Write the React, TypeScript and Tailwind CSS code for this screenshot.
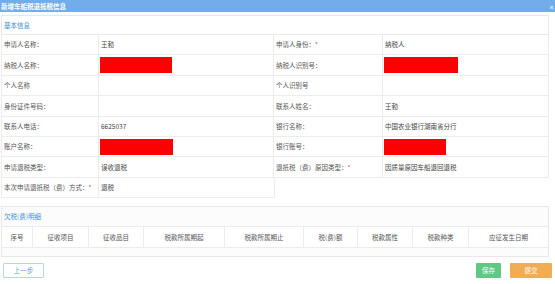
import React from 'react';

const font = { fontFamily: '"Noto Sans CJK SC", "Noto Sans", sans-serif' };

type Cell = { label: string; req?: boolean; value?: string; redact?: number };

const rows: [Cell, Cell][] = [
  [{ label: '申请人名称：', value: '王勃' }, { label: '申请人身份：', req: true, value: '纳税人' }],
  [{ label: '纳税人名称：', redact: 72 }, { label: '纳税人识别号：', redact: 74 }],
  [{ label: '个人名称' }, { label: '个人识别号' }],
  [{ label: '身份证件号码：' }, { label: '联系人姓名：', value: '王勃' }],
  [{ label: '联系人电话：', value: '6625037' }, { label: '银行名称：', value: '中国农业银行湖南省分行' }],
  [{ label: '账户名称：', redact: 73 }, { label: '银行账号：', redact: 62 }],
  [{ label: '申请退税类型：', value: '误收退税' }, { label: '退抵税（费）原因类型：', req: true, value: '因质量原因车船退回退税' }],
];

const cols = [
  { t: '序号', w: 'w-[31px]' },
  { t: '征收项目', w: 'w-[56px]' },
  { t: '征收品目', w: 'w-[55px]' },
  { t: '税款所属期起', w: 'w-[81px]' },
  { t: '税款所属期止', w: 'w-[79px]' },
  { t: '税(费)额', w: 'w-[54px]' },
  { t: '税款属性', w: 'w-[55px]' },
  { t: '税款种类', w: 'w-[56px]' },
  { t: '应征发生日期', w: 'flex-1' },
];

function Label({ c, w }: { c: Cell; w: string }) {
  return (
    <div className={`${w} flex items-center pl-[2px] border-r border-[#ececec] text-[#555]`}>
      {c.label}
      {c.req && <span className="text-[#e8403a]">*</span>}
    </div>
  );
}

function Value({ c, w, last }: { c: Cell; w: string; last?: boolean }) {
  return (
    <div
      className={`${w} flex items-center ${c.redact ? 'pl-[1px]' : 'pl-[2px]'} text-[#444] ${last ? '' : 'border-r border-[#ececec]'}`}
    >
      {c.redact ? <div className="h-[16px] bg-[#ff0000]" style={{ width: c.redact }} /> : c.value}
    </div>
  );
}

export default function App() {
  return (
    <div className="w-[555px] h-[284px] bg-white text-[6.5px] leading-none overflow-hidden" style={font}>
      <div className="h-[12px] bg-[#72ade9] flex items-center justify-between pl-[1px] pr-[1px] text-white font-bold">
        <span>新增车船税退抵税信息</span>
        <span className="text-[5px]">×</span>
      </div>

      <div className="ml-[1px] mt-[3px] w-[548px]">
        <div className="h-[20px] border border-[#e8e8e8] flex items-center pl-[2px] text-[#3d8fd6]">基本信息</div>
        {rows.map(([l, r], i) => (
          <div key={i} className="h-[20.4px] flex border-x border-b border-[#ececec]">
            <Label c={l} w="w-[97px]" />
            <Value c={l} w="w-[175px]" />
            <Label c={r} w="w-[109px]" />
            <Value c={r} w="flex-1" last />
          </div>
        ))}
        <div className="h-[20.4px] w-[274px] flex border-x border-b border-[#ececec]">
          <Label c={{ label: '本次申请退抵税（费）方式：', req: true }} w="w-[97px]" />
          <Value c={{ label: '', value: '退税' }} w="flex-1" last />
        </div>
      </div>

      <div className="ml-[1px] mt-[8px] w-[548px] h-[51px] border border-[#e8e8e8] bg-[#fcfcfc]">
        <div className="h-[20px] flex items-center pl-[2px] text-[#3d8fd6] border-b border-[#ececec]">欠税(费)明细</div>
        <div className="h-[21px] flex border-b border-[#ececec] bg-white">
          {cols.map((c, i) => (
            <div
              key={c.t}
              className={`${c.w} flex items-center justify-center text-[#555] ${i < cols.length - 1 ? 'border-r border-[#ececec]' : ''}`}
            >
              {c.t}
            </div>
          ))}
        </div>
      </div>

      <div className="mt-[6px] flex items-center px-[3px]">
        <button className="w-[41px] h-[15px] border border-[#b8d3ef] rounded-[1px] text-[#5a9ad8] bg-white">上一步</button>
        <div className="flex-1" />
        <button className="w-[25px] h-[15px] bg-[#5ec884] text-white rounded-[1px]">保存</button>
        <button className="ml-[9px] w-[42px] h-[15px] bg-[#f1ad54] text-white rounded-[1px]">提交</button>
      </div>
    </div>
  );
}
